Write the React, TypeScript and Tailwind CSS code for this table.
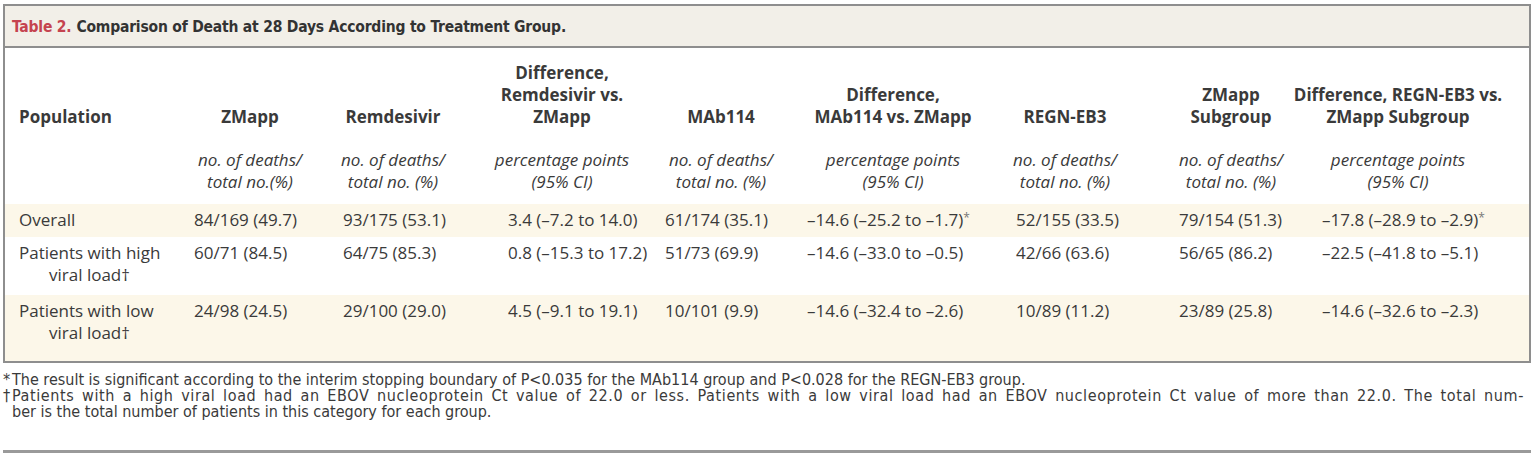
import React from "react";

const body = { fontFamily: '"Open Sans", "Noto Sans", sans-serif' };
const narrow = { fontFamily: '"DejaVu Sans Condensed", "Liberation Sans Narrow", "Liberation Sans", sans-serif' };

const cols = "grid grid-cols-[175px_149px_165px_157px_142px_209px_163px_143px_197px]";

const headerW = ["w-[112px]", "w-[100px]", "w-[108px]", "w-[112px]", "w-[172px]", "w-[98px]", "w-[104px]", "w-[152px]"];

const headers: string[][] = [
  ["ZMapp"],
  ["Remdesivir"],
  ["Difference,", "Remdesivir vs.", "ZMapp"],
  ["MAb114"],
  ["Difference,", "MAb114 vs. ZMapp"],
  ["REGN-EB3"],
  ["ZMapp", "Subgroup"],
  ["Difference, REGN-EB3 vs.", "ZMapp Subgroup"],
];

const units: string[][] = [
  ["no. of deaths/", "total no.(%)"],
  ["no. of deaths/", "total no. (%)"],
  ["percentage points", "(95% CI)"],
  ["no. of deaths/", "total no. (%)"],
  ["percentage points", "(95% CI)"],
  ["no. of deaths/", "total no. (%)"],
  ["no. of deaths/", "total no. (%)"],
  ["percentage points", "(95% CI)"],
];

type Row = { label: string[]; cells: { v: string; star?: boolean }[]; band: boolean; h: string };

const rows: Row[] = [
  {
    label: ["Overall"],
    band: true,
    h: "h-[33px]",
    cells: [
      { v: "84/169 (49.7)" },
      { v: "93/175 (53.1)" },
      { v: "3.4 (\u20137.2 to 14.0)" },
      { v: "61/174 (35.1)" },
      { v: "\u201314.6 (\u201325.2 to \u20131.7)", star: true },
      { v: "52/155 (33.5)" },
      { v: "79/154 (51.3)" },
      { v: "\u201317.8 (\u201328.9 to \u20132.9)", star: true },
    ],
  },
  {
    label: ["Patients with high", "viral load\u2020"],
    band: false,
    h: "h-[58px]",
    cells: [
      { v: "60/71 (84.5)" },
      { v: "64/75 (85.3)" },
      { v: "0.8 (\u201315.3 to 17.2)" },
      { v: "51/73 (69.9)" },
      { v: "\u201314.6 (\u201333.0 to \u20130.5)" },
      { v: "42/66 (63.6)" },
      { v: "56/65 (86.2)" },
      { v: "\u201322.5 (\u201341.8 to \u20135.1)" },
    ],
  },
  {
    label: ["Patients with low", "viral load\u2020"],
    band: true,
    h: "h-[66px]",
    cells: [
      { v: "24/98 (24.5)" },
      { v: "29/100 (29.0)" },
      { v: "4.5 (\u20139.1 to 19.1)" },
      { v: "10/101 (9.9)" },
      { v: "\u201314.6 (\u201332.4 to \u20132.6)" },
      { v: "10/89 (11.2)" },
      { v: "23/89 (25.8)" },
      { v: "\u201314.6 (\u201332.6 to \u20132.3)" },
    ],
  },
];

export default function App() {
  return (
    <div className="w-[1534px] h-[455px] bg-white text-[#3a3a3a] pt-[4px] px-[3px]">
      <div className="border-2 border-[#8e8e8e]">
        <div
          className="h-[42px] bg-[#f2efe8] border-b-2 border-[#8e8e8e] flex items-center pl-[7px] pt-[3px] text-[15.5px] tracking-[-0.2px] font-bold"
          style={narrow}
        >
          <span className="text-[#c5434f]">Table 2.</span>
          <span className="ml-[5px] text-[#333333]">Comparison of Death at 28 Days According to Treatment Group.</span>
        </div>
        <div style={body} className="text-[17px] leading-[22px]">
          <div className={`${cols} px-[14px] pt-[14px] items-end font-bold`}>
            <div>Population</div>
            {headers.map((h, i) => (
              <div key={i} className={`${headerW[i]} flex justify-center`}>
                <div className="text-center whitespace-nowrap">
                  {h.map((l, j) => (
                    <div key={j}>{l}</div>
                  ))}
                </div>
              </div>
            ))}
          </div>
          <div className={`${cols} px-[14px] pt-[21px] pb-[11px] italic`}>
            <div />
            {units.map((h, i) => (
              <div key={i} className={`${headerW[i]} flex justify-center`}>
                <div className="text-center whitespace-nowrap">
                  {h.map((l, j) => (
                    <div key={j}>{l}</div>
                  ))}
                </div>
              </div>
            ))}
          </div>
          {rows.map((r, i) => (
            <div key={i} className={`${cols} px-[14px] pt-[5px] ${r.h} ${r.band ? "bg-[#fcf7e9]" : "bg-white"}`}>
              <div className="whitespace-nowrap">
                {r.label.map((l, j) => (
                  <div key={j} className={j > 0 ? "pl-[30px]" : ""}>{l}</div>
                ))}
              </div>
              {r.cells.map((c, j) => (
                <div key={j} className="whitespace-nowrap">
                  {c.v}
                  {c.star && <span className="text-[12px] align-top relative top-[-2px] text-[#777]">*</span>}
                </div>
              ))}
            </div>
          ))}
        </div>
      </div>
      <div className="mt-[9px] pr-[7px] text-[16px] leading-[16px] text-[#3a3a3a]" style={narrow}>
        <div className="flex">
          <span className="w-[9px] shrink-0">*</span>
          <span>The result is significant according to the interim stopping boundary of P&lt;0.035 for the MAb114 group and P&lt;0.028 for the REGN-EB3 group.</span>
        </div>
        <div className="flex">
          <span className="w-[9px] shrink-0">{"\u2020"}</span>
          <div className="flex-1">
            <div className="text-justify [text-align-last:justify] tracking-[0.6px] whitespace-nowrap">
              Patients with a high viral load had an EBOV nucleoprotein Ct value of 22.0 or less. Patients with a low viral load had an EBOV nucleoprotein Ct value of more than 22.0. The total num-
            </div>
            <div>ber is the total number of patients in this category for each group.</div>
          </div>
        </div>
      </div>
      <div className="mt-[30px] h-[3px] bg-[#9a9a9a]" />
    </div>
  );
}
